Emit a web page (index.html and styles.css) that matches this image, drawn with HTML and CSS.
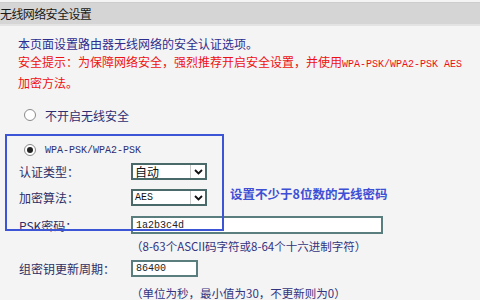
FILE: index.html
```html
<!DOCTYPE html>
<html lang="zh-CN">
<head>
<meta charset="utf-8">
<title>无线网络安全设置</title>
<link rel="stylesheet" href="styles.css">
</head>
<body>
<div class="header">无线网络安全设置</div>
<div class="content">
  <div class="intro">
    <p class="desc">本页面设置路由器无线网络的安全认证选项。</p>
    <p class="warn">安全提示：为保障网络安全，强烈推荐开启安全设置，并使用<span class="mono">WPA-PSK/WPA2-PSK AES</span><br>加密方法。</p>
  </div>
  <div class="radio-row first">
    <span class="radio"></span>
    <span class="radio-label">不开启无线安全</span>
  </div>
  <div class="section">
    <div class="radio-row">
      <span class="radio checked"></span>
      <span class="radio-label mono">WPA-PSK/WPA2-PSK</span>
    </div>
    <div class="row r1">
      <span class="label">认证类型：</span>
      <div class="select"><span class="sel-text">自动</span><span class="sel-btn"><svg width="9" height="6" viewBox="0 0 9 6"><polyline points="1,1 4.5,4.5 8,1" fill="none" stroke="#111" stroke-width="1.8"/></svg></span></div>
    </div>
    <div class="row r2">
      <span class="label">加密算法：</span>
      <div class="select"><span class="sel-text mono-sm">AES</span><span class="sel-btn"><svg width="9" height="6" viewBox="0 0 9 6"><polyline points="1,1 4.5,4.5 8,1" fill="none" stroke="#111" stroke-width="1.8"/></svg></span></div>
      <span class="note">设置不少于8位数的无线密码</span>
    </div>
    <div class="row r3">
      <span class="label">PSK密码：</span>
      <div class="input wide"><span class="mono-in">1a2b3c4d</span></div>
    </div>
  </div>
  <p class="hint h1">（8-63个ASCII码字符或8-64个十六进制字符）</p>
  <div class="row r4">
    <span class="label">组密钥更新周期：</span>
    <div class="input short"><span class="mono-in">86400</span></div>
  </div>
  <p class="hint h2">（单位为秒，最小值为30，不更新则为0）</p>
</div>
</body>
</html>
```

FILE: styles.css
```css
* { box-sizing: border-box; }
html, body {
  margin: 0;
  padding: 0;
  background: #f4f4f4;
  width: 480px;
  height: 300px;
  overflow: hidden;
  font-family: "Noto Sans CJK SC", "Liberation Sans", sans-serif;
  font-size: 12px;
}
.header {
  margin-top: 2px;
  height: 24px;
  background: #d5d5d5;
  border-top: 1px solid #cdcdcd;
  border-bottom: 2px solid #e3e3e3;
  color: #1a1a1a;
  font-size: 12px;
  line-height: 21px;
  letter-spacing: -0.6px;
}
.content {
  padding-left: 18px;
}
p { margin: 0; }
.intro {
  margin-top: 9px;
  line-height: 18px;
}
.desc { color: #2e2e8e; }
.warn { color: #ee1111; }
.mono {
  font-family: "Liberation Mono", monospace;
  font-size: 10px;
}
.radio-row {
  display: flex;
  align-items: center;
  height: 18px;
}
.radio-row.first { margin-top: 14px; }
.radio {
  width: 12px;
  height: 12px;
  margin-left: 6px;
  border-radius: 50%;
  border: 1px solid #8a8a8a;
  background: #fff;
  display: flex;
  align-items: center;
  justify-content: center;
}
.radio.checked::after {
  content: "";
  width: 6px;
  height: 6px;
  border-radius: 50%;
  background: #222;
}
.radio-label {
  margin-left: 9px;
  color: #2e2e70;
}
.section {
  position: relative;
  margin-top: 10px;
  padding-top: 7px;
  padding-bottom: 3px;
}
.section::before {
  content: "";
  position: absolute;
  left: -13px;
  top: 0;
  width: 215px;
  height: 93px;
  border: 2px solid #3b55d6;
  pointer-events: none;
}
.row {
  display: flex;
  align-items: center;
}
.r1 { margin-top: 4px; }
.r2 { margin-top: 4px; }
.r3 { margin-top: 5px; }
.r4 { margin-top: 5px; }
.label {
  width: 113px;
  padding-left: 1px;
  color: #2e2e66;
}
.select {
  width: 76px;
  height: 17px;
  border: 2px solid #4a6a6a;
  background: #fff;
  display: flex;
  align-items: stretch;
}
.sel-text {
  flex: 1;
  padding-left: 2px;
  line-height: 13px;
  color: #111;
}
.mono-sm {
  font-family: "Liberation Mono", monospace;
  font-size: 10px;
}
.sel-btn {
  width: 15px;
  border-left: 1px solid #c8c8c8;
  display: flex;
  align-items: center;
  justify-content: center;
}
.note {
  margin-left: 23px;
  margin-bottom: 8px;
  color: #3d4fd4;
  font-weight: bold;
  font-size: 12.5px;
}
.input {
  height: 18px;
  border: 2px solid #5a7e7e;
  background: #fff;
  display: flex;
  align-items: center;
  padding-left: 3px;
}
.input.wide { width: 252px; }
.input.short { width: 67px; height: 17px; }
.mono-in {
  font-family: "Liberation Mono", monospace;
  font-size: 10px;
  color: #222;
}
.hint {
  padding-left: 113px;
  line-height: 18px;
  color: #333380;
  font-size: 11.5px;
}
.h2 { margin-top: 7px; }
```
